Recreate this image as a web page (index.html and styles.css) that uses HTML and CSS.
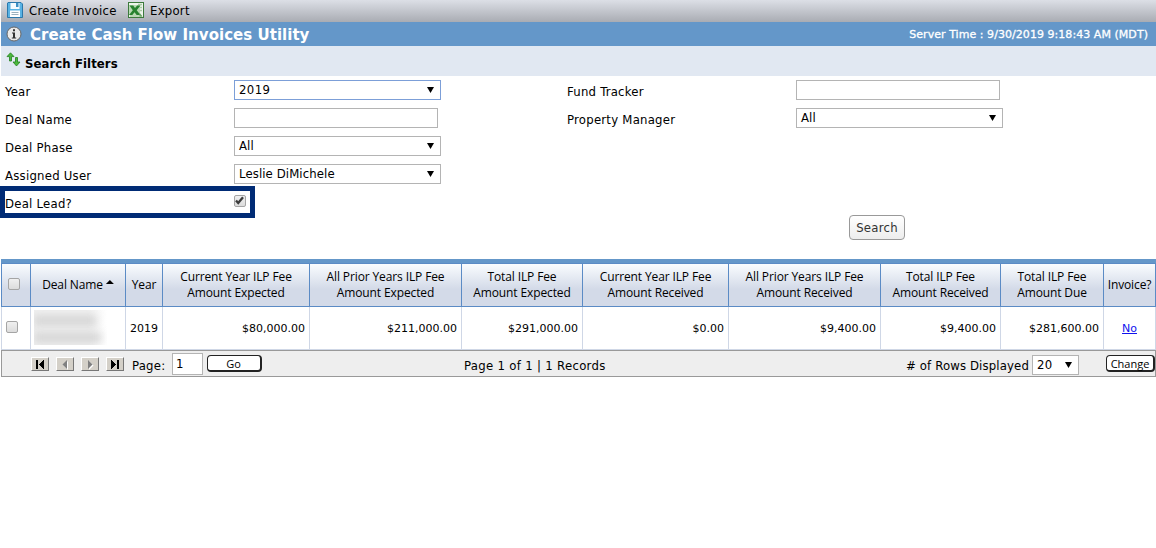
FILE: index.html
```html
<!DOCTYPE html>
<html lang="en">
<head>
<meta charset="utf-8">
<title>Create Cash Flow Invoices Utility</title>
<link rel="stylesheet" href="styles.css">
</head>
<body>
<nav class="toolbar">
  <a class="tool"><svg width="16" height="16" viewBox="0 0 16 16"><path d="M1 .5h13l1.500 1.500v13.500H.5V1z" fill="#58b2e4" stroke="#2b78ac"/><path d="M3.500 1h9v6h-9z" fill="#f5fbff"/><path d="M9 1h2.500v4H9z" fill="#3c8fc4"/><path d="M3 8.500h10V15H3z" fill="#fff"/><path d="M4.500 10.500h7M4.500 12.500h7" stroke="#9bb0bd"/></svg><span>Create Invoice</span></a>
  <a class="tool export"><svg width="16" height="16" viewBox="0 0 16 16"><rect x=".5" y=".5" width="15" height="15" fill="#eef5ec" stroke="#3c7a3c"/><path d="M10 2.500h4M12 5.500h2M12 8.500h2M2 14h12" stroke="#a9cba3" stroke-width="1.500"/><path d="M1 3h11v10H1z" fill="#b9d9b3"/><path d="M1.500 3.500h3.700L7 6l2.200-2.500H12.500L8.700 8.200 12.500 13H8.700L6.500 10.200 4.300 13H1L4.800 8.200z" fill="#27822f"/><path d="M11.500 10.500l3 4h-3z" fill="#6aa565"/></svg><span>Export</span></a>
</nav>
<header class="titlebar">
  <svg width="16" height="16" viewBox="0 0 16 16"><circle cx="8" cy="8" r="7" fill="#e9e9e9" stroke="#666"/><path d="M7 3.200h2v2H7zM6 6.500h3v5h1.200v1H5.800v-1H7v-4H6z" fill="#333"/></svg>
  <h1>Create Cash Flow Invoices Utility</h1>
  <span class="server">Server Time : 9/30/2019 9:18:43 AM (MDT)</span>
</header>
<div class="section">
  <svg width="15" height="15" viewBox="0 0 15 15"><path d="M4.500.8L8 4.600H5.500V9h-2V4.600H1z" fill="#4bb83c" stroke="#23801f" stroke-width=".8"/><path d="M9.500 5.500h2V10H14l-3.500 4L7 10h2.500z" fill="#4bb83c" stroke="#23801f" stroke-width=".8"/></svg>
  <h2>Search Filters</h2>
</div>
<form class="filters">
  <div class="fields">
    <div class="field"><label>Year</label><div class="select focus"><span class="num">2019</span><i></i></div></div>
    <div class="field"><label>Deal Name</label><div class="input"></div></div>
    <div class="field"><label>Deal Phase</label><div class="select"><span>All</span><i></i></div></div>
    <div class="field"><label>Assigned User</label><div class="select"><span>Leslie DiMichele</span><i></i></div></div>
    <div class="lead"><label>Deal Lead?</label><div class="check"><svg width="11" height="11" viewBox="0 0 11 11"><path d="M2 5.500L4.200 8 9 2.200" fill="none" stroke="#3c3c3c" stroke-width="2.300"/></svg></div></div>
  </div>
  <div class="fields right">
    <div class="field"><label>Fund Tracker</label><div class="input"></div></div>
    <div class="field"><label>Property Manager</label><div class="select"><span>All</span><i></i></div></div>
    <div class="search"><span>Search</span></div>
  </div>
</form>
<section class="grid">
  <div class="row head">
    <div class="pick"><b class="check"></b></div>
    <div><span>Deal Name</span><i class="sort"></i></div>
    <div>Year</div>
    <div>Current Year ILP Fee<br>Amount Expected</div>
    <div>All Prior Years ILP Fee<br>Amount Expected</div>
    <div>Total ILP Fee<br>Amount Expected</div>
    <div>Current Year ILP Fee<br>Amount Received</div>
    <div>All Prior Years ILP Fee<br>Amount Received</div>
    <div>Total ILP Fee<br>Amount Received</div>
    <div>Total ILP Fee<br>Amount Due</div>
    <div>Invoice?</div>
  </div>
  <div class="row data">
    <div class="pick"><b class="check"></b></div>
    <div class="name"><div class="redacted"><i class="r1"></i><i class="r2"></i></div></div>
    <div class="mid">2019</div>
    <div>$80,000.00</div>
    <div>$211,000.00</div>
    <div>$291,000.00</div>
    <div>$0.00</div>
    <div>$9,400.00</div>
    <div>$9,400.00</div>
    <div>$281,600.00</div>
    <div class="mid"><a>No</a></div>
  </div>
  <footer class="pager">
    <div class="pagenav">
      <button class="nav"><svg width="16" height="11" viewBox="0 0 16 11" shape-rendering="crispEdges"><path d="M4 1h2v9H4zM12 1v9L7 5.500z"/></svg></button>
      <button class="nav off"><svg width="16" height="11" viewBox="0 0 16 11"><path d="M11 2v9L6.500 6.500z" fill="#fff"/><path d="M10 1v9L5.500 5.500z"/></svg></button>
      <button class="nav off"><svg width="16" height="11" viewBox="0 0 16 11"><path d="M7 2v9l4.500-4.500z" fill="#fff"/><path d="M6 1v9l4.500-4.500z"/></svg></button>
      <button class="nav"><svg width="16" height="11" viewBox="0 0 16 11" shape-rendering="crispEdges"><path d="M4 1v9l5-4.500zM10 1h2v9h-2z"/></svg></button>
    </div>
    <span class="p-label">Page:</span>
    <div class="pageno">1</div>
    <button class="btn go">Go</button>
    <span class="p-info">Page 1 of 1 | 1 Records</span>
    <span class="p-rows"># of Rows Displayed</span>
    <div class="rowsel"><span class="num">20</span><i></i></div>
    <button class="btn change">Change</button>
  </footer>
</section>
</body>
</html>
```
FILE: styles.css
```css
* { box-sizing: border-box; }
body {
  margin: 0;
  padding-left: 1px;
  background: #fff;
  color: #000;
  font: 13px/16px "DejaVu Sans Condensed", "DejaVu Sans", sans-serif;
  font-stretch: condensed;
  letter-spacing: .24px;
  white-space: nowrap;
}
svg { display: block; flex: none; }
.toolbar { height: 22px; display: flex; padding: 2px 0 0 6px; background: linear-gradient(#dcdfe6, #a9acb3); }
.tool { display: flex; height: 16px; gap: 6px; }
.tool span { width: 99px; padding-top: 1px; }
.titlebar { height: 24px; display: flex; align-items: center; padding: 0 8px 0 5px; background: #6497c9; color: #fff; }
.titlebar h1 { margin: 0 auto 0 8px; padding-top: 1px; font: bold 15px/18px "DejaVu Sans", sans-serif; letter-spacing: .03px; }
.server { padding-top: 1px; font: 11px/14px "DejaVu Sans", sans-serif; letter-spacing: .05px; -webkit-text-stroke: .3px #fff; }
.section { height: 30px; display: flex; padding: 6px 0 0 5px; background: #e1e8f2; gap: 4px; }
.section h2 { margin: 0; padding-top: 4px; font: bold 13px/16px "DejaVu Sans Condensed", sans-serif; letter-spacing: .08px; }

.filters { display: flex; height: 183px; padding-top: 4px; }
.fields { width: 562px; padding-left: 4px; }
.fields.right { width: 590px; }
.field { height: 28px; display: flex; }
.field label { width: 229px; padding-top: 4px; }
.input { width: 204px; height: 20px; border: 1px solid #b4b4b4; }
.select { width: 207px; height: 20px; border: 1px solid #b4b4b4; display: flex; justify-content: space-between; padding: 1px 6px 0 4px; letter-spacing: .1px; }
.select.focus { border-color: #7c9fd8; }
.num { letter-spacing: .4px; }
.select i, .rowsel i { width: 7px; height: 6px; background: #000; clip-path: polygon(0 0, 100% 0, 50% 100%); margin-top: 5px; }
.lead { width: 255px; height: 32px; margin: -6px 0 0 -5px; border: 5px solid #002b75; display: flex; }
.lead label { width: 229px; padding-top: 5px; }
.check { width: 12px; height: 12px; border: 1px solid #a5a5a5; border-radius: 2px; background: linear-gradient(#f0f0f0, #dcdcdc); }
.lead .check { margin-top: 4px; }
.lead .check svg { margin: -1px 0 0 -1px; }
.search { width: 56px; height: 25px; margin: 79px 0 0 282px; border: 1px solid #999; border-radius: 4px; background: linear-gradient(#fff, #ededed); color: #333; text-align: center; padding-top: 4px; }

.grid { border-top: 4px solid #6497c9; }
.row { display: grid; grid-template-columns: 29px 95px 37px 147px 152px 121px 146px 152px 120px 103px 53px; }
.head { height: 44px; border: solid #5b8bc5; border-width: 1px 0; background: linear-gradient(#f9fcfe, #d3dae8 60%); font: 12px/16px "Open Sans", sans-serif; letter-spacing: -.12px; text-align: center; }
.head > div { border-left: 1px solid #5b8bc5; display: flex; align-items: center; justify-content: center; }
.head > div:last-child { border-right: 1px solid #5b8bc5; }
.head > .pick { padding: 0 4px 2px 0; }
.sort { width: 8px; height: 4px; margin: -6px 0 0 3px; background: #000; clip-path: polygon(50% 0, 100% 100%, 0 100%); }
.data { height: 43px; font: 11px/14px "DejaVu Sans", sans-serif; letter-spacing: 0; }
.data > div { border-left: 1px solid #cfd7e6; border-bottom: 1px solid #cfd7e6; display: flex; align-items: center; justify-content: flex-end; padding: 1px 4px 0 0; }
.data > div:last-child { border-right: 1px solid #cfd7e6; }
.data > .mid { justify-content: center; padding: 1px 0 0; }
.data > .pick { justify-content: flex-start; padding: 0 0 2px 4px; }
.data a { color: #11e; text-decoration: underline; }
.data > .name { justify-content: flex-start; padding: 0 0 2px 3px; }
.redacted { width: 73px; height: 35px; overflow: hidden; background: linear-gradient(90deg, #f0f0f0 75%, #fff); padding-top: 6px; }
.redacted i { display: block; height: 9px; margin-bottom: 8px; background: #d2d2d2; filter: blur(4px); }
.r1 { width: 62px; }
.r2 { width: 67px; }

.pager { height: 27px; display: flex; border: 1px solid #999; background: #eee; }
.pagenav { display: flex; gap: 7px; padding: 6px 0 0 29px; width: 130px; }
button { font: inherit; margin: 0; padding: 0; }
.nav { width: 18px; height: 14px; background: #d4d0c8; border: 1px solid; border-color: #fff #777 #777 #fff; }
.nav.off { fill: #808080; }
.p-label { width: 40px; padding-top: 7px; }
.pageno { width: 31px; height: 22px; margin-top: 2px; border: 1px solid #b4b4b4; background: #fff; padding: 2px 3px; }
.btn { height: 17px; margin-top: 4px; border: 1px solid #222; border-right-width: 2px; border-bottom-width: 2px; border-radius: 4px; background: #fff; font: 11px/13px "Open Sans", sans-serif; }
.go { width: 55px; margin-left: 4px; padding-right: 1px; }
.p-info { margin-left: 202px; width: 442px; padding-top: 7px; letter-spacing: .31px; }
.p-rows { width: 126px; padding-top: 7px; letter-spacing: .14px; }
.rowsel { width: 47px; height: 20px; margin-top: 4px; border: 1px solid #b4b4b4; background: #fff; display: flex; justify-content: space-between; padding: 1px 6px 0 4px; }
.change { width: 49px; margin-left: 27px; }
```
